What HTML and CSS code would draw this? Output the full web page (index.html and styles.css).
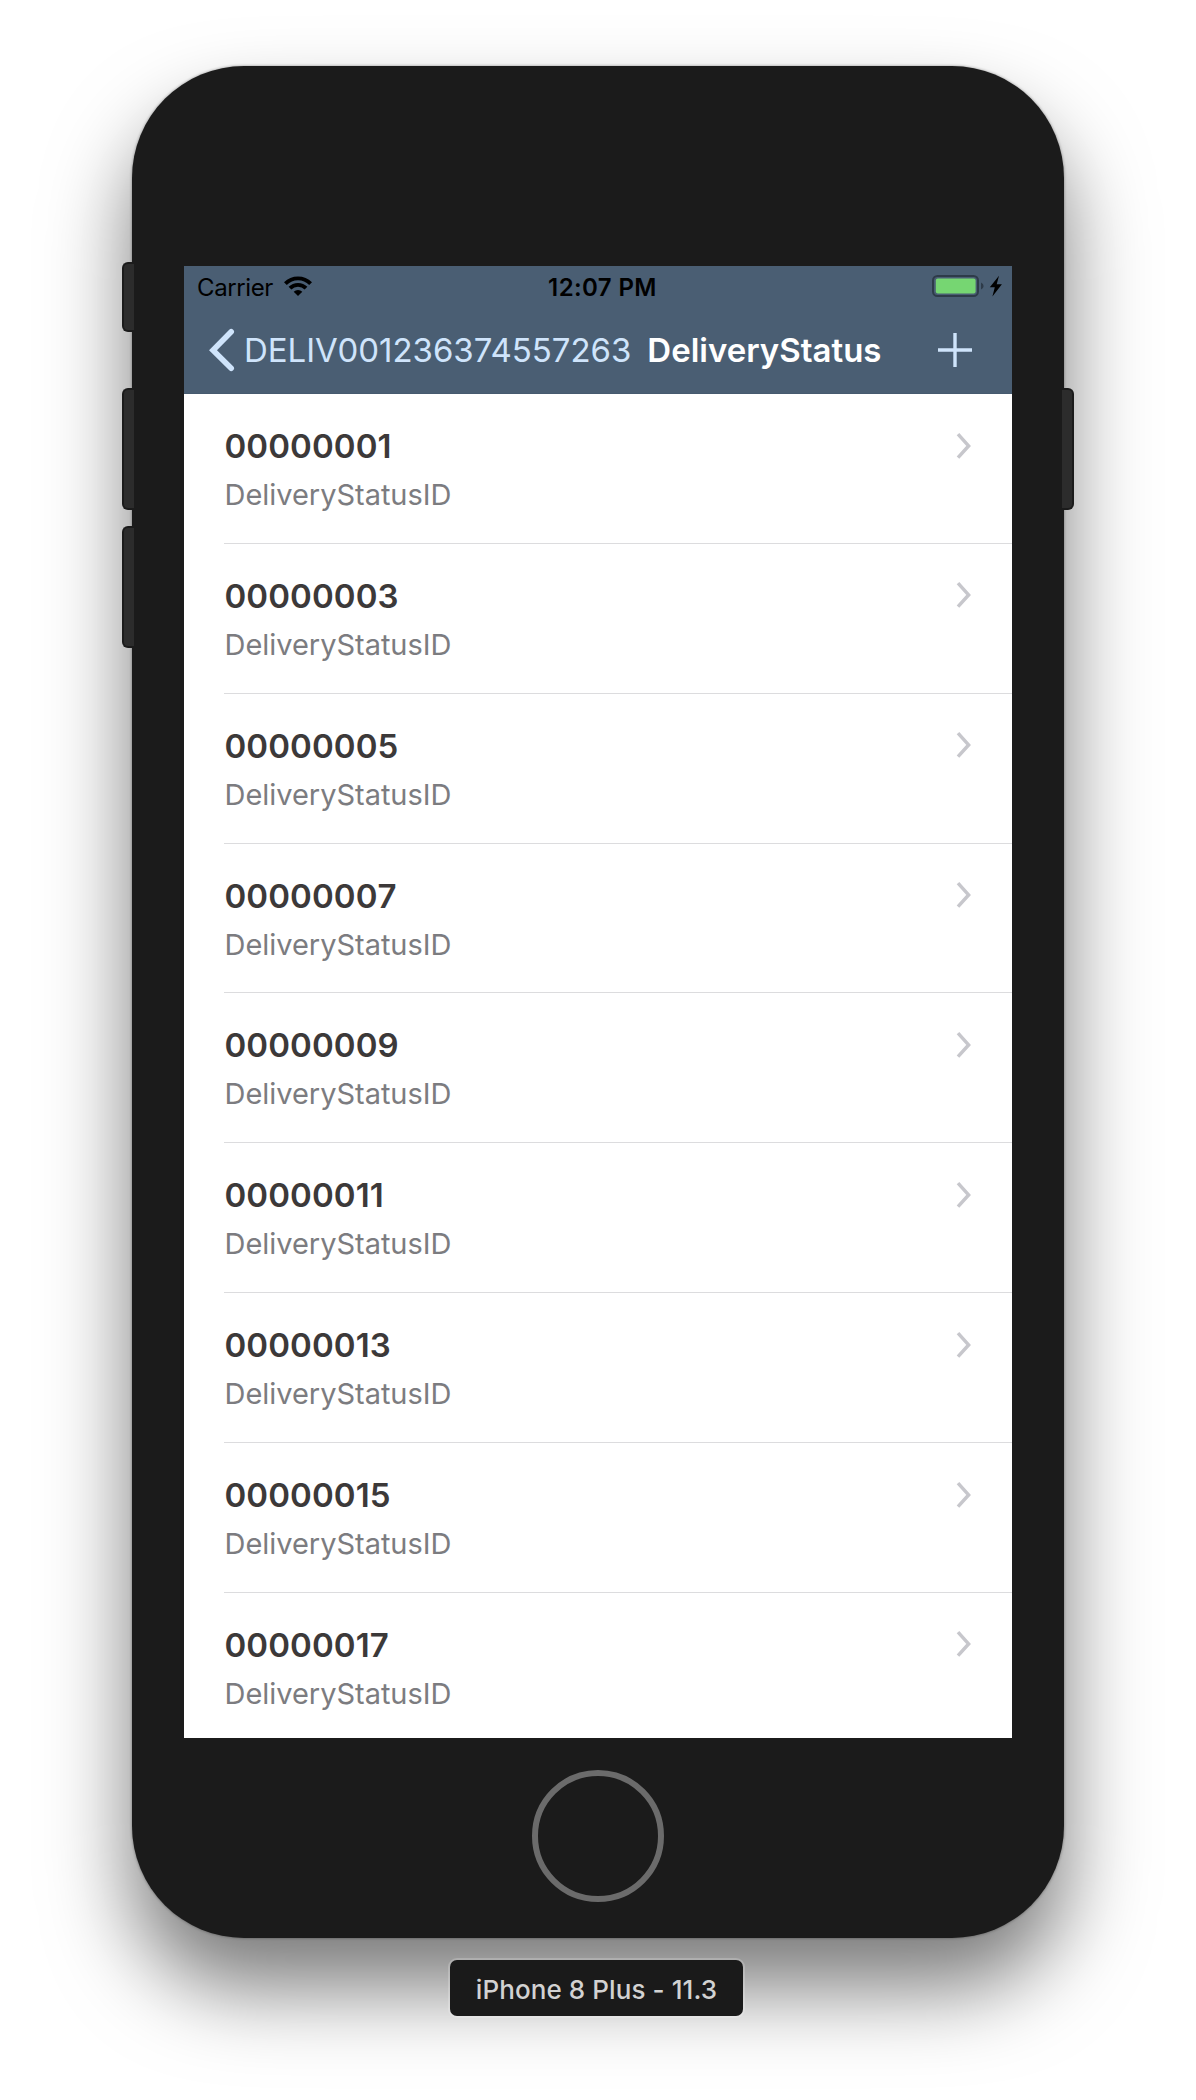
FILE: index.html
```
<!DOCTYPE html>
<html lang="en">
<head>
<meta charset="utf-8">
<title>DeliveryStatus</title>
<link rel="stylesheet" href="styles.css">
</head>
<body>
<svg class="defs" width="0" height="0" aria-hidden="true">
  <symbol id="chevron" viewBox="0 0 15 28"><path d="M2 2.2 12.6 13.9 2 25.6" fill="none" stroke="#c7c7cc" stroke-width="3.5"/></symbol>
</svg>
<main class="phone">
  <span class="key key-mute"></span>
  <span class="key key-up"></span>
  <span class="key key-down"></span>
  <span class="key key-power"></span>
  <div class="screen">
    <header class="header">
      <div class="status">
        <div class="carrier">
          <span>Carrier</span>
          <svg width="28" height="21" viewBox="0 0 28 21">
            <g fill="none" stroke="#000" stroke-width="3.9">
              <path d="M1.4 7.7a17.6 17.6 0 0 1 25.2 0"/>
              <path d="M6 12.2a11.3 11.3 0 0 1 16 0"/>
            </g>
            <path d="M9.7 15.8a6.2 6.2 0 0 1 8.6 0L14 20.1z"/>
          </svg>
        </div>
        <div class="time">12:07 PM</div>
        <div class="power">
          <svg width="71" height="22" viewBox="0 0 71 22">
            <rect x="1" y="1" width="45" height="20" rx="4.5" fill="none" stroke="#2e3b49" stroke-width="2"/>
            <rect x="3.8" y="3.6" width="39.8" height="15" rx="2" fill="#76d672"/>
            <path d="M49 7.5q2.6 1 2.6 3.5T49 14.5z" fill="#2e3b49"/>
            <path d="M67 .8 57.8 12.2h5L60.4 21.4 69.9 9.3h-5.2z"/>
          </svg>
        </div>
      </div>
      <nav class="nav">
        <svg class="back" width="26" height="44" viewBox="0 0 26 44"><path d="M22.2 3.8 4 22.2 22.2 40.2" fill="none" stroke="#cfe4fb" stroke-width="5.6" stroke-linecap="round"/></svg>
        <span class="back-label">DELIV001236374557263</span>
        <h1 class="title">DeliveryStatus</h1>
        <svg class="add" width="34" height="34" viewBox="0 0 34 34"><path d="M17 0v34M0 17h34" fill="none" stroke="#cfe4fb" stroke-width="3.4"/></svg>
      </nav>
    </header>
    <ul class="list">
      <li class="row"><div><h2>00000001</h2><p>DeliveryStatusID</p></div><svg class="chevron"><use href="#chevron"/></svg></li>
      <li class="row"><div><h2>00000003</h2><p>DeliveryStatusID</p></div><svg class="chevron"><use href="#chevron"/></svg></li>
      <li class="row"><div><h2>00000005</h2><p>DeliveryStatusID</p></div><svg class="chevron"><use href="#chevron"/></svg></li>
      <li class="row"><div><h2>00000007</h2><p>DeliveryStatusID</p></div><svg class="chevron"><use href="#chevron"/></svg></li>
      <li class="row"><div><h2>00000009</h2><p>DeliveryStatusID</p></div><svg class="chevron"><use href="#chevron"/></svg></li>
      <li class="row"><div><h2>00000011</h2><p>DeliveryStatusID</p></div><svg class="chevron"><use href="#chevron"/></svg></li>
      <li class="row"><div><h2>00000013</h2><p>DeliveryStatusID</p></div><svg class="chevron"><use href="#chevron"/></svg></li>
      <li class="row"><div><h2>00000015</h2><p>DeliveryStatusID</p></div><svg class="chevron"><use href="#chevron"/></svg></li>
      <li class="row"><div><h2>00000017</h2><p>DeliveryStatusID</p></div><svg class="chevron"><use href="#chevron"/></svg></li>
    </ul>
  </div>
  <div class="home"></div>
</main>
<div class="device-name">iPhone 8 Plus - 11.3</div>
</body>
</html>
```
FILE: styles.css
```
* { box-sizing: border-box; margin: 0; padding: 0; }

body {
  display: flex;
  flex-direction: column;
  align-items: center;
  height: 2100px;
  padding-top: 66px;
  overflow: hidden;
  background: #fff;
  font-family: Inter, "Liberation Sans", sans-serif;
}

svg { display: block; flex: none; }
.defs { position: absolute; }

.phone {
  position: relative;
  display: flex;
  flex-direction: column;
  align-items: center;
  flex: none;
  width: 932px;
  height: 1872px;
  padding-top: 200px;
  border-radius: 112px;
  background: #1b1b1b;
  box-shadow: 0 0 3px rgba(0, 0, 0, .4), 0 50px 84px rgba(0, 0, 0, .52);
}

/* Hardware keys on the edges of the case */
.key {
  position: absolute;
  left: -10px;
  width: 12px;
  height: 122px;
  border: 2px solid #1b1b1b;
  border-right: 0;
  border-radius: 6px 0 0 6px;
  background: #2c2c2c;
}
.key-mute { top: 196px; height: 70px; }
.key-up { top: 322px; }
.key-down { top: 460px; }
.key-power {
  top: 322px;
  left: auto;
  right: -10px;
  border-right: 2px solid #1b1b1b;
  border-left: 0;
  border-radius: 0 6px 6px 0;
}

.screen {
  flex: none;
  width: 828px;
  height: 1472px;
  overflow: hidden;
  background: #fff;
}

.header {
  height: 128px;
  border-bottom: 1px solid #465a6f;
  background: #4a5e73;
}

.status {
  display: grid;
  grid-template-columns: 1fr auto 1fr;
  height: 42px;
  padding: 7px 9px 0 13px;
  font-size: 24px;
  line-height: 30px;
  color: #000;
}
.carrier { display: flex; gap: 11px; letter-spacing: -.38px; }
.carrier svg { margin-top: 3px; }
.time { padding-left: 5px; font-weight: 600; letter-spacing: .4px; }
.power { display: flex; justify-content: flex-end; padding-top: 2px; }

.nav {
  display: flex;
  align-items: center;
  height: 85px;
  padding: 0 40px 2px 25px;
  font-size: 33px;
  line-height: 40px;
}
.back { margin-right: 9px; }
.back-label { color: #cfe4fb; letter-spacing: -.026px; }
.title { margin-left: 16px; font-size: 33px; font-weight: 600; color: #fff; }
.add { margin: 0 0 0 auto; }

.list { list-style: none; }
.row {
  display: flex;
  justify-content: space-between;
  height: 149.86px;
  margin-left: 40px;
  padding: 32px 39px 0 0;
  border-bottom: 1px solid #dcdcde;
}
.row:last-child { border-bottom: 0; }
.row h2 {
  padding-left: .5px;
  font-size: 33px;
  font-weight: 600;
  line-height: 40px;
  letter-spacing: .1px;
  font-kerning: none;
  color: #3c3939;
}
.row p {
  margin-top: 11px;
  padding-left: .5px;
  font-size: 29px;
  line-height: 36px;
  letter-spacing: -.03px;
  color: #7c7c80;
}
.chevron { width: 15px; height: 28px; margin: 5.5px 2px 0 0; }

.home {
  flex: none;
  width: 132px;
  height: 132px;
  margin-top: 32px;
  border: 6px solid #6b6b6b;
  border-radius: 50%;
}

.device-name {
  position: relative;
  flex: none;
  width: 293px;
  height: 56px;
  margin: 22px 3px 0 0;
  border-radius: 7px;
  background: #1a1a1a;
  box-shadow: 0 0 0 2px rgba(255, 255, 255, .2);
  color: #d2d2d2;
  font-size: 26px;
  font-weight: 500;
  line-height: 60px;
  letter-spacing: .09px;
  text-align: center;
}
```
